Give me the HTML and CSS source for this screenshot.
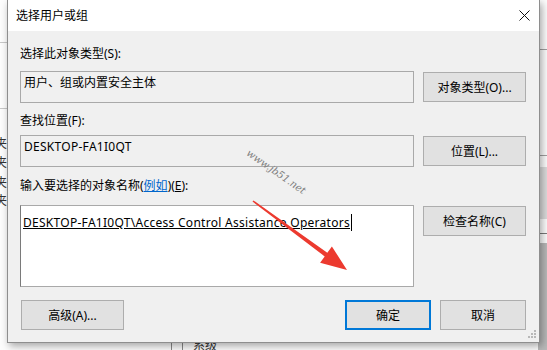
FILE: index.html
```html
<!DOCTYPE html>
<html>

<head>
    <meta charset="UTF-8">
    <title>选择用户或组</title>
    <link rel="stylesheet" href="styles.css">
</head>

<body>
    <div class="desktop">
        <!-- bits of the window behind the dialog -->
        <div class="backdrop">
            <span class="bg-rule bg-rule-left1"></span>
            <span class="bg-rule bg-rule-left2"></span>
            <span class="bg-char bg-char1">夹</span>
            <span class="bg-char bg-char2">夹</span>
            <span class="bg-char bg-char3">夹</span>
            <span class="bg-char bg-char4">夹</span>
            <span class="bg-rule bg-rule-right1"></span>
            <span class="bg-rule bg-rule-right2"></span>
            <span class="bg-block bg-block-right"></span>
            <span class="bg-rule bg-rule-right3"></span>
            <span class="bg-block bg-block-right2"></span>
            <span class="bg-col bg-col1"></span>
            <span class="bg-col bg-col2"></span>
            <span class="bg-text">系级</span>
        </div>

        <div class="dialog">
            <div class="titlebar">
                <span class="title">选择用户或组</span>
                <span class="close">
                    <svg width="11" height="11" viewBox="0 0 11 11">
                        <path d="M0.5 0.5 L10.5 10.5 M10.5 0.5 L0.5 10.5" stroke="#111" stroke-width="1" fill="none" />
                    </svg>
                </span>
            </div>

            <div class="content">
                <div class="label label-first">选择此对象类型(S):</div>
                <div class="row">
                    <div class="box">用户、组或内置安全主体</div>
                    <button class="btn">对象类型(O)...</button>
                </div>

                <div class="label label-second">查找位置(F):</div>
                <div class="row">
                    <div class="box latin">DESKTOP-FA1I0QT</div>
                    <button class="btn">位置(L)...</button>
                </div>

                <div class="label label-third">输入要选择的对象名称(<a class="link">例如</a>)(<u>E</u>):</div>
                <div class="row row-top">
                    <div class="names latin"><span class="resolved">DESKTOP-FA1I0QT\Access Control Assistance Operators</span><span class="caret"></span></div>
                    <button class="btn btn-check">检查名称(C)</button>
                </div>

                <div class="footer">
                    <button class="btn btn-advanced">高级(A)...</button>
                    <div class="actions">
                        <button class="btn btn-small btn-default">确定</button>
                        <button class="btn btn-small">取消</button>
                    </div>
                </div>
            </div>

            <svg class="grip" width="9" height="9" viewBox="0 0 9 9">
                <rect x="6" y="0" width="2" height="2" fill="#b8b8b8" />
                <rect x="3" y="3" width="2" height="2" fill="#b8b8b8" />
                <rect x="6" y="3" width="2" height="2" fill="#b8b8b8" />
                <rect x="0" y="6" width="2" height="2" fill="#b8b8b8" />
                <rect x="3" y="6" width="2" height="2" fill="#b8b8b8" />
                <rect x="6" y="6" width="2" height="2" fill="#b8b8b8" />
            </svg>
        </div>

        <div class="watermark">www.jb51.net</div>

        <svg class="arrow" width="547" height="350" viewBox="0 0 547 350">
            <polygon points="252.5,201.6 324.7,256.4 320.1,262.7 347,270 331.9,246.5 327.3,252.8 253.5,200.4" fill="#ec3a2f" />
        </svg>
    </div>
</body>

</html>
```

FILE: styles.css
```css
* {
    box-sizing: border-box;
}

body {
    margin: 0;
    font-family: "Noto Sans", "Noto Sans CJK SC", sans-serif;
    font-size: 12px;
    color: #000;
    background: #fff;
}

.desktop {
    position: relative;
    width: 547px;
    height: 350px;
    overflow: hidden;
    background: #fdfdfd;
}

/* background window */
.backdrop {
    position: absolute;
    inset: 0;
}

.bg-rule {
    position: absolute;
    height: 1px;
    background: #c8c8c8;
}

.bg-rule-left1 { left: 0; top: 42px; width: 8px; }
.bg-rule-left2 { left: 0; top: 108px; width: 8px; }
.bg-rule-right1 { left: 538px; top: 49px; width: 9px; background: #a0a0a0; }
.bg-rule-right2 { left: 538px; top: 155px; width: 9px; background: #a0a0a0; }
.bg-rule-right3 { left: 538px; top: 233px; width: 9px; background: #7a7a7a; }

.bg-block {
    position: absolute;
    left: 538px;
    width: 9px;
    background: #dcdcdc;
}

.bg-block-right { top: 167px; height: 52px; }
.bg-block-right2 { top: 243px; height: 107px; background: #b9b9b9; }

.bg-char {
    position: absolute;
    left: -5px;
    font-size: 12px;
    line-height: 14px;
    color: #333;
}

.bg-char1 { top: 137px; }
.bg-char2 { top: 156px; }
.bg-char3 { top: 176px; }
.bg-char4 { top: 194px; }

.bg-col {
    position: absolute;
    top: 330px;
    width: 1px;
    height: 20px;
    background: #8a8a8a;
}

.bg-col1 { left: 171px; }
.bg-col2 { left: 182px; }

.bg-text {
    position: absolute;
    left: 193px;
    top: 336px;
    font-size: 12px;
    color: #333;
}

/* dialog */
.dialog {
    position: relative;
    z-index: 1;
    margin-left: 7px;
    width: 533px;
    height: 343px;
    background: #f0f0f0;
    border: 1px solid #8e8e8e;
    border-top: 0;
    box-shadow: 2px 3px 8px rgba(0, 0, 0, 0.35);
}

.titlebar {
    display: flex;
    align-items: center;
    justify-content: space-between;
    height: 31px;
    padding-left: 8px;
    background: #fff;
}

.title {
    font-size: 12px;
    line-height: 16px;
}

.close {
    display: flex;
    align-items: center;
    justify-content: center;
    width: 30px;
    height: 31px;
    padding-bottom: 1px;
}

.content {
    padding: 15px 13px 0 12px;
}

.label {
    line-height: 16px;
    height: 16px;
}

.label-second { margin-top: 10px; }
.label-third { margin-top: 11px; }

.link {
    color: #0066cc;
    text-decoration: underline;
}

.row {
    display: flex;
    align-items: center;
    gap: 9px;
    margin-top: 9px;
}

.row + .label-second + .row {
    margin-top: 6px;
}

.row-top {
    align-items: flex-start;
    margin-top: 11px;
}

.box {
    width: 394px;
    height: 32px;
    padding: 3px 3px 0;
    line-height: 16px;
    border: 1px solid #a9a9a9;
    background: #f0f0f0;
}

.latin {
    letter-spacing: 0.28px;
}

.names {
    width: 394px;
    height: 82px;
    padding: 8px 2px 0;
    line-height: 17px;
    border: 1px solid #a9a9a9;
    border-left-color: #7a7a7a;
    background: #fff;
    white-space: nowrap;
}

.resolved {
    text-decoration: underline;
}

.caret {
    display: inline-block;
    width: 1px;
    height: 17px;
    margin-left: 1px;
    vertical-align: top;
    background: #000;
}

.btn {
    width: 103px;
    height: 30px;
    padding: 0;
    font-family: inherit;
    font-size: 12px;
    color: #000;
    background: #e1e1e1;
    border: 1px solid #adadad;
}

.btn-check {
    margin-top: 1px;
}

.footer {
    display: flex;
    justify-content: space-between;
    margin-top: 13px;
}

.btn-advanced {
    margin-left: 1px;
}

.actions {
    display: flex;
    gap: 9px;
}

.btn-small {
    width: 86px;
}

.btn-default {
    border: 2px solid #0078d7;
}

.grip {
    position: absolute;
    right: 2px;
    bottom: 3px;
}

/* overlays added on the screenshot */
.watermark {
    position: absolute;
    z-index: 2;
    left: 240px;
    top: 166px;
    width: 72px;
    font-family: "DejaVu Serif", serif;
    font-style: italic;
    font-size: 10px;
    line-height: 12px;
    color: #7d7d7d;
    text-align: center;
    transform: rotate(35deg);
}

.arrow {
    position: absolute;
    z-index: 3;
    left: 0;
    top: 0;
    pointer-events: none;
}
```
